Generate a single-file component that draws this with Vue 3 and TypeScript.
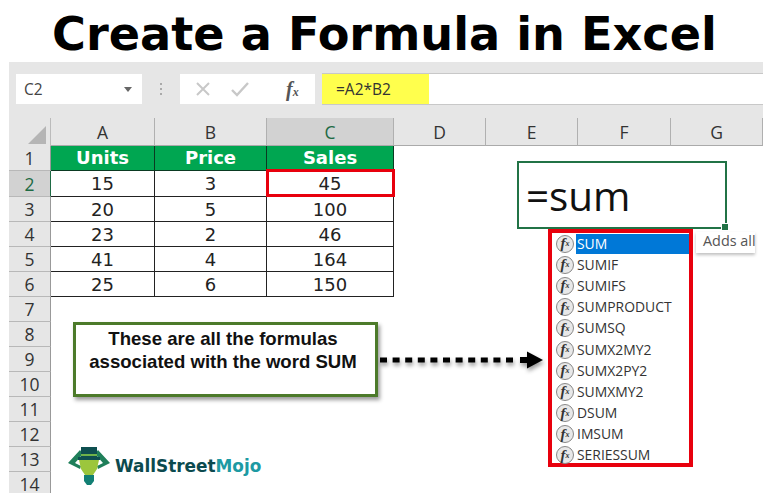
<template>
  <div class="page">
    <h1 class="title">Create a Formula in Excel</h1>

    <div class="excel">
      <div class="toolbar">
        <div class="name-box">
          <span>C2</span>
          <i class="caret"></i>
        </div>
        <div class="grip"></div>
        <div class="fx-buttons">
          <svg width="18" height="18" viewBox="0 0 18 18" class="cancel">
            <path d="M3 3l12 12M15 3L3 15" fill="none" stroke="#c8c8c8" stroke-width="2" />
          </svg>
          <svg width="20" height="18" viewBox="0 0 20 18" class="enter">
            <path d="M2 10l5 5L18 3" fill="none" stroke="#c8c8c8" stroke-width="2.4" />
          </svg>
          <span class="fx">f<small>x</small></span>
        </div>
        <div class="formula-bar">
          <span class="formula-text">=A2*B2</span>
        </div>
      </div>

      <div class="sheet">
        <div class="corner"><i></i></div>
        <div v-for="col in columns" :key="col" class="col-head" :class="{ active: col === 'C' }">{{ col }}</div>

        <template v-for="row in rows" :key="row">
          <div class="row-head" :class="{ active: row === 2 }">{{ row }}</div>
          <div
            v-for="(col, i) in columns"
            :key="col"
            class="cell"
            :class="{ head: row === 1 && i < 3, body: row > 1 && row < 7 && i < 3 }"
          >
            {{ cellText(row, i) }}
            <span v-if="row === 2 && i === 2" class="selected"></span>
          </div>
        </template>
      </div>

      <div class="edit-cell">
        <span>=sum</span>
        <i class="handle"></i>
      </div>

      <ul class="suggest">
        <li v-for="(name, i) in formulas" :key="name" :class="{ first: i === 0 }">
          <span class="fn-icon">f<small>x</small></span>
          <span class="fn-name">{{ name }}</span>
        </li>
      </ul>
      <div class="tip">Adds all</div>

      <div class="callout">
        These are all the formulas<br />associated with the word SUM
      </div>

      <svg class="arrow" width="170" height="30" viewBox="0 0 170 30">
        <path d="M1 15H136" stroke="#000" stroke-width="5" stroke-dasharray="7 5.6" />
        <path d="M141 12h7V6.5L164 15l-16 8.500V18h-7z" fill="#000" />
      </svg>

      <div class="logo">
        <svg width="44" height="40" viewBox="0 0 44 40">
          <path d="M1 17L13 4l3 4-8 9 6 3-1 3z" fill="#1f7f5a" />
          <path d="M43 17L31 4l-3 4 8 9-6 3 1 3z" fill="#1f7f5a" />
          <path d="M14 1h16v10H14z" fill="#0e4f50" />
          <path d="M14 8h16v2H14z" fill="#6fb24a" />
          <path d="M11 11h22v3H11z" fill="#0e4f50" />
          <path d="M12 14h20l-2 9-4 6h-8l-4-6z" fill="#9cc63c" />
          <path d="M17 29h10v6l-3 4h-4l-3-4z" fill="#127f74" />
        </svg>
        <span class="brand">WallStreet<em>Mojo</em></span>
      </div>
    </div>
  </div>
</template>

<script setup lang="ts">
const columns = ['A', 'B', 'C', 'D', 'E', 'F', 'G']
const rows = Array.from({ length: 14 }, (_, i) => i + 1)

const table: (string | number)[][] = [
  ['Units', 'Price', 'Sales'],
  [15, 3, 45],
  [20, 5, 100],
  [23, 2, 46],
  [41, 4, 164],
  [25, 6, 150]
]

const formulas = [
  'SUM',
  'SUMIF',
  'SUMIFS',
  'SUMPRODUCT',
  'SUMSQ',
  'SUMX2MY2',
  'SUMX2PY2',
  'SUMXMY2',
  'DSUM',
  'IMSUM',
  'SERIESSUM'
]

const cellText = (row: number, col: number) => table[row - 1]?.[col] ?? ''
</script>

<style>
html,
body {
  margin: 0;
  background: #fff;
  overflow: hidden;
}
</style>

<style scoped>
.page {
  width: 765px;
  height: 493px;
  overflow: hidden;
  font-family: "Open Sans", sans-serif;
}

.title {
  margin: 0;
  height: 62px;
  padding: 3px 0 0 4px;
  box-sizing: border-box;
  font: bold 46.2px/62px "DejaVu Sans", sans-serif;
  text-align: center;
  color: #000;
  white-space: nowrap;
}

.excel {
  position: relative;
  margin-left: 9px;
  width: 754px;
  height: 431px;
}

.toolbar {
  display: flex;
  align-items: center;
  height: 56px;
  padding: 0 0 2px 7px;
  box-sizing: border-box;
  background: #e6e6e6;
}

.name-box {
  display: flex;
  align-items: center;
  justify-content: space-between;
  width: 126px;
  height: 30px;
  padding: 0 10px 0 8px;
  box-sizing: border-box;
  background: #fff;
  color: #444;
  font-size: 15.5px;
}

.caret {
  border: 4px solid transparent;
  border-top: 5px solid #666;
  border-bottom: 0;
}

.grip {
  width: 2px;
  height: 13px;
  margin: 0 18px 0 18px;
  background: repeating-linear-gradient(#aaa 0 2px, transparent 2px 5px);
}

.fx-buttons {
  display: flex;
  align-items: center;
  width: 135px;
  height: 30px;
  box-sizing: border-box;
  padding-left: 14px;
  background: #fff;
}

.enter {
  margin-left: 18px;
}

.fx {
  margin-left: 36px;
  font: italic bold 20px "Liberation Serif", serif;
  color: #555;
}

.fx small {
  font-size: 12px;
}

.formula-bar {
  flex: 1;
  height: 30px;
  margin-left: 7px;
  background: #fff;
  box-shadow: 0 -1px #c8c8c8, 0 1px #c8c8c8;
}

.formula-text {
  display: block;
  width: 107px;
  height: 100%;
  padding-left: 14px;
  box-sizing: border-box;
  background: #ffff4d;
  color: #333;
  font-size: 15.5px;
  line-height: 30px;
}

.sheet {
  display: grid;
  grid-template-columns: 42px 104px 112px 127px 92px 92px 93px 92px;
  grid-template-rows: 28px 25px 26px repeat(12, 25px);
  background: #fff;
}

.corner {
  position: relative;
  background: #e6e6e6;
  border-right: 1px solid #bbb;
}

.corner i {
  position: absolute;
  right: 4px;
  bottom: 2px;
  border-style: solid;
  border-width: 0 0 18px 18px;
  border-color: transparent transparent #b5b5b5 transparent;
}

.col-head {
  display: flex;
  align-items: center;
  justify-content: center;
  background: #e6e6e6;
  border-right: 1px solid #b0b0b0;
  border-bottom: 1px solid #aaa;
  box-sizing: border-box;
  color: #333;
  font-size: 17.5px;
}

.col-head.active {
  background: #d2d2d2;
  color: #1e6a44;
}

.row-head {
  display: flex;
  align-items: center;
  justify-content: center;
  background: #e6e6e6;
  border-bottom: 1px solid #b8b8b8;
  border-right: 1px solid #999;
  box-sizing: border-box;
  color: #333;
  font-size: 17.5px;
}

.row-head.active {
  background: #d2d2d2;
  color: #1e6a44;
  border-right-color: #1e6a44;
}

.cell {
  position: relative;
  display: flex;
  align-items: center;
  justify-content: center;
  box-sizing: border-box;
  color: #222;
  font: 18px "DejaVu Sans", sans-serif;
}

.cell.head {
  background: #00a651;
  color: #fff;
  font-weight: bold;
  padding-bottom: 2px;
  border-right: 1px solid #0a3a22;
  border-bottom: 1px solid #0a3a22;
}

.cell.body {
  border-right: 1px solid #222;
  border-bottom: 1px solid #222;
}

.selected {
  position: absolute;
  inset: -2px -2px -1px -1px;
  border: 3px solid #e8000d;
}

.edit-cell {
  position: absolute;
  left: 508px;
  top: 99px;
  width: 210px;
  height: 68px;
  box-sizing: border-box;
  display: flex;
  align-items: center;
  padding: 1px 0 0 7px;
  border: 2px solid #217346;
  background: #fff;
  color: #111;
  font-size: 40.4px;
}

.handle {
  position: absolute;
  right: -4px;
  bottom: -4px;
  width: 6px;
  height: 6px;
  background: #217346;
  border: 1px solid #fff;
}

.suggest {
  position: absolute;
  left: 539px;
  top: 167px;
  width: 145px;
  height: 238px;
  margin: 0;
  padding: 0;
  box-sizing: border-box;
  border: 4px solid #e8000d;
  background: #fff;
  list-style: none;
}

.suggest li {
  display: flex;
  align-items: center;
  height: 21.2px;
  color: #333;
  font-size: 13.9px;
}

.fn-icon {
  flex: none;
  display: flex;
  align-items: center;
  justify-content: center;
  width: 16px;
  height: 16px;
  margin: 0 2px 0 4px;
  border: 1px solid #888;
  border-radius: 50%;
  background: #e8e8e8;
  color: #333;
  font: italic bold 15px "Liberation Serif", serif;
}

.fn-icon small {
  font-size: 8px;
}

.fn-name {
  flex: 1;
  line-height: 20px;
  padding-left: 1px;
}

.first .fn-name {
  background: #0078d7;
  color: #fff;
}

.tip {
  position: absolute;
  left: 687px;
  top: 170px;
  width: 59px;
  height: 21px;
  padding-left: 7px;
  box-sizing: border-box;
  overflow: hidden;
  background: #fff;
  box-shadow: 0 2px 3px rgba(0, 0, 0, 0.25);
  color: #555;
  font-size: 14.4px;
  line-height: 18px;
  white-space: nowrap;
}

.callout {
  position: absolute;
  left: 64px;
  top: 260px;
  width: 305px;
  height: 75px;
  padding: 2px 5px 0 0;
  box-sizing: border-box;
  border: 3px solid #4c7a2a;
  background: #fff;
  box-shadow: 2px 3px 4px rgba(0, 0, 0, 0.4);
  color: #111;
  font: bold 18.6px/23px "Liberation Sans", sans-serif;
  text-align: center;
  white-space: nowrap;
}

.arrow {
  position: absolute;
  left: 370px;
  top: 283px;
  filter: drop-shadow(1px 3px 2px rgba(0, 0, 0, 0.4));
}

.logo {
  position: absolute;
  left: 58px;
  top: 384px;
  display: flex;
  align-items: center;
  gap: 4px;
}

.brand {
  font: bold 16.9px "DejaVu Sans", sans-serif;
  color: #0c4a4e;
}

.brand em {
  font-style: normal;
  color: #1d9aa3;
}
</style>
